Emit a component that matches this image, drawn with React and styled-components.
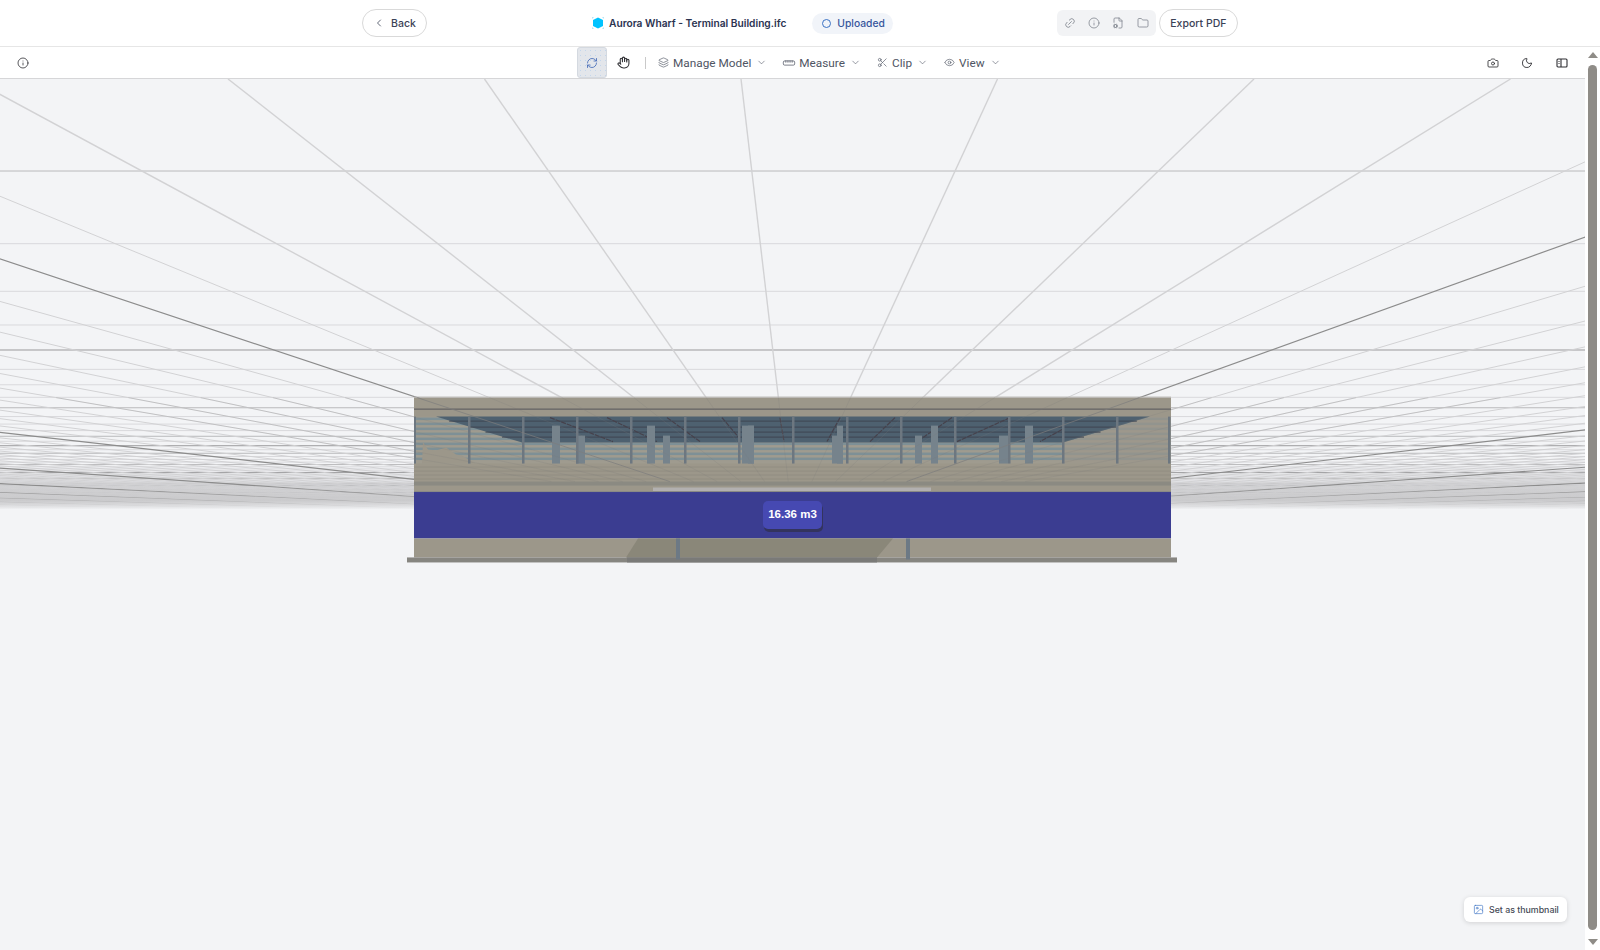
import React from 'react'
import styled, { createGlobalStyle } from 'styled-components'
import {
  Camera, ChevronDown, ChevronLeft, Eye, FileCog, Folder, Hand, Image, Info, Layers, Link2, Moon,
  RefreshCw, Ruler, Scissors,
} from 'lucide-react'

const GlobalStyle = createGlobalStyle`
  html, body { margin: 0; height: 100%; overflow: hidden; background: #fff; }
  #root { height: 100%; }
`

const Page = styled.div`
  display: flex;
  flex-direction: column;
  height: 950px;
  font-family: Inter, "Liberation Sans", sans-serif;
`
const Header = styled.header`
  display: flex;
  align-items: center;
  height: 46px;
  padding-left: 362px;
  border-bottom: 1px solid #e6e6e6;
  flex: none;
`
const PillButton = styled.button`
  display: flex;
  align-items: center;
  justify-content: center;
  gap: 6px;
  flex: none;
  height: 28px;
  width: ${(p) => p.$width}px;
  margin-left: ${(p) => p.$left || 0}px;
  padding: 0;
  background: #fff;
  border: 1px solid #d9d9d9;
  border-radius: 14px;
  color: #3b4256;
  font: 500 10.5px Inter, sans-serif;
`
const ModelIcon = styled.svg`
  flex: none;
  width: 12px;
  height: 12px;
  margin-left: 165px;
`
const Title = styled.span`
  margin-left: 5px;
  font-size: 10.2px;
  font-weight: 600;
  color: #2b3350;
  white-space: nowrap;
`
const Status = styled.span`
  display: flex;
  align-items: center;
  gap: 6px;
  flex: none;
  height: 21px;
  margin-left: 26px;
  padding: 0 8px 0 10px;
  background: #f1f4f9;
  border-radius: 11px;
  color: #37569c;
  font-size: 10.3px;
  font-weight: 500;
`
const StatusRing = styled.i`
  width: 7px;
  height: 7px;
  border: 1.3px solid #3b72c4;
  border-radius: 50%;
`
const IconGroup = styled.div`
  display: flex;
  align-items: center;
  justify-content: space-around;
  flex: none;
  width: 99px;
  height: 26px;
  margin-left: 164px;
  padding: 0 1px;
  box-sizing: border-box;
  background: #f2f3f5;
  border-radius: 6px;
  color: #7a7f88;
`
const LinkGlyph = styled(Link2)`
  transform: rotate(-45deg);
`
const Body = styled.div`
  flex: 1;
  display: flex;
  min-height: 0;
`
const Main = styled.main`
  flex: 1;
  display: flex;
  flex-direction: column;
  min-width: 0;
`
const Toolbar = styled.div`
  display: flex;
  align-items: center;
  flex: none;
  height: 31px;
  padding-right: 17px;
  border-bottom: 1px solid #d6d6d8;
  color: #4a4f5a;
`
const PlainIcon = styled.span`
  display: flex;
  align-items: center;
  flex: none;
  margin-left: ${(p) => (p.$push ? 'auto' : `${p.$left || 0}px`)};
  color: #2f2f33;
`
const ActiveTool = styled.span`
  display: flex;
  align-items: center;
  justify-content: center;
  align-self: stretch;
  flex: none;
  width: 30px;
  margin-left: 548px;
  background-color: #e3e6eb;
  background-image: radial-gradient(#c3d6ec 0.7px, transparent 0.8px);
  background-size: 5px 5px;
  border: 1px solid #d4d9e0;
  border-radius: 3px;
  box-sizing: border-box;
  color: #3f66b5;
`
const Separator = styled.i`
  flex: none;
  width: 1px;
  height: 12px;
  margin-left: 15px;
  background: #c9c9c9;
`
const Menu = styled.span`
  display: flex;
  align-items: center;
  flex: none;
  margin-left: ${(p) => p.$left}px;
  color: #4f5563;
  font: 400 11.8px Roboto, sans-serif;
  white-space: nowrap;
`
const MenuLabel = styled.span`
  margin: 0 5px 0 4px;
`
const RulerGlyph = styled(Ruler)`
  transform: rotate(-45deg);
`
const Viewport = styled.div`
  position: relative;
  flex: 1;
  min-height: 0;
  background: #f3f4f6;
`
const Scene = styled.svg`
  display: block;
  width: 100%;
  height: 100%;
`
const VolumeTag = styled.div`
  position: absolute;
  left: 763px;
  top: 422px;
  width: 59px;
  height: 28px;
  padding-bottom: 2px;
  box-sizing: border-box;
  display: flex;
  align-items: center;
  justify-content: center;
  background: #4649b2;
  border-radius: 5px;
  box-shadow: 1px 3px 0 #33345e;
  color: #fff;
  font: 700 11.5px "Liberation Sans", sans-serif;
`
const ThumbnailButton = styled.div`
  position: absolute;
  right: 18px;
  bottom: 28px;
  display: flex;
  align-items: center;
  gap: 5px;
  width: 103px;
  height: 25px;
  padding-left: 9px;
  box-sizing: border-box;
  background: #fff;
  border-radius: 6px;
  box-shadow: 0 1px 5px rgba(0, 0, 0, 0.14);
  color: #454a55;
  font-size: 8.8px;
  font-weight: 500;
  white-space: nowrap;
`
const ScrollRail = styled.div`
  display: flex;
  flex-direction: column;
  align-items: center;
  flex: none;
  width: 15px;
  padding: 5px 0;
  box-sizing: border-box;
  background: #fff;
`
const Arrow = styled.i`
  width: 0;
  height: 0;
  border-left: 5px solid transparent;
  border-right: 5px solid transparent;
  ${(p) => (p.$down ? 'border-top' : 'border-bottom')}: 6px solid #8f8c87;
`
const Thumb = styled.div`
  flex: 1;
  width: 9px;
  margin: 7px 0 9px;
  background: #8f8c87;
  border-radius: 5px;
`

const VP_X = 793
const VP_Y = 522
const FOG_Y = 508

const radialX = (top, y) => VP_X + ((top - VP_X) * (VP_Y - y)) / (VP_Y - 78)

// ground grid, same perspective on both axes
const radial = []
for (let n = -240; n <= 240; n++) {
  radial.push({ n, top: VP_X - 52 + 256.5 * n })
}
const depth = []
for (let m = 4; m < 110; m++) {
  depth.push({ m, y: 520 - 1333 / (m - 0.19) })
}
const isMajorRadial = (n) => n !== 0 && Math.abs(n) % 10 === 5

function Ground() {
  return (
    <g fill="none">
      {depth.filter((d) => d.y < FOG_Y).map((d) => (
        <line key={d.m} x1="0" x2="1585" y1={d.y} y2={d.y}
          stroke={d.m % 10 === 8 ? '#9a9a9c' : d.m % 4 === 0 ? '#b9b9bb' : '#d9d9dc'} strokeWidth="1" />
      ))}
      {radial.map((r) => (
        <line key={r.n} x1={r.top} y1="78" x2={radialX(r.top, FOG_Y)} y2={FOG_Y}
          stroke={isMajorRadial(r.n) ? '#8c8c8c' : '#d2d2d4'} strokeWidth={isMajorRadial(r.n) ? 1.2 : Math.abs(r.n) < 4 ? 1.4 : 1} />
      ))}
      <rect x="0" y="486" width="1585" height="23" fill="url(#fog)" />
    </g>
  )
}

const BAY_XS = [468, 522, 576, 630, 684, 738, 792, 846, 900, 954, 1008, 1062, 1116, 1168]
const PILLARS = [
  [552, 8, 425], [576, 9, 435], [647, 8, 425], [663, 7, 435], [742, 12, 425], [748, 6, 425],
  [832, 11, 435], [837, 6, 425], [915, 7, 435], [931, 7, 425], [999, 9, 435], [1025, 8, 425],
]
const GLASS_BANDS = [417, 422, 427, 432, 437, 442, 447, 452, 457]
const RAKES = [
  [550, 417, 613, 441], [607, 417, 657, 441], [667, 417, 700, 441], [722, 417, 738, 436],
  [780, 417, 784, 441], [840, 417, 827, 441], [895, 417, 870, 441], [952, 417, 917, 441],
  [1010, 417, 957, 441], [1062, 429, 1040, 441],
]

function Terminal() {
  return (
    <g>
      <rect x="414" y="397" width="757" height="94" fill="#9c978a" />
      <rect x="414" y="396" width="757" height="1" fill="#b5b3ad" />
      <rect x="414" y="408" width="757" height="1" fill="#55555a" />
      <rect x="414" y="416" width="757" height="47" fill="#9f9b8f" />
      {GLASS_BANDS.map((y) => (
        <rect key={y} x="414" y={y} width="757" height="2.5" fill="#7e9096" />
      ))}
      {/* sun patch washes out the right end of the glazing */}
      <polygon points="1171,416 1150,416 1063,442 1063,463 1171,463" fill="#9c978a" fillOpacity="0.68" />
      <polygon points="422,463 423,442 428,449 436,450 446,447 456,454 462,455 475,463" fill="#9c978a" />
      <polygon points="436,416 1150,416 1063,442 522,442" fill="#4e6170" />
      {[420, 426, 431, 436].map((y) => (
        <rect key={y} x={436 + (y - 416) * 3.3} y={y} width={714 - (y - 416) * 6.6} height="1" fill="#3f4552" />
      ))}
      {RAKES.map(([x1, y1, x2, y2]) => (
        <line key={x1} x1={x1} y1={y1} x2={x2} y2={y2} stroke="#46424c" strokeWidth="1.2" strokeDasharray="5 1" />
      ))}
      {PILLARS.map(([x, w, y]) => (
        <rect key={x} x={x} y={y} width={w} height={463 - y} fill="#76838c" />
      ))}
      {BAY_XS.map((x) => (
        <rect key={x} x={x} y="416" width="2.5" height="47" fill="#6d7780" />
      ))}
      <rect x="414" y="416" width="2" height="47" fill="#6d7780" />
      {[466, 470, 474, 478].map((y) => (
        <rect key={y} x="414" y={y} width="757" height="1" fill="#928e82" />
      ))}
      <rect x="414" y="481" width="757" height="4" fill="#8b8a82" />
      <rect x="653" y="487" width="278" height="4" fill="#b2b0b0" />
      <rect x="414" y="490.5" width="757" height="1" fill="#8a8a86" />
      <rect x="414" y="491.5" width="757" height="46.5" fill="#3b3d91" />
      <rect x="414" y="538" width="757" height="19" fill="#9c978a" />
      <polygon points="638,538 893,538 877,557 626,557" fill="#8a8779" />
      <rect x="407" y="557" width="770" height="5" fill="#868580" />
      <rect x="627" y="557" width="250" height="5" fill="#7a7a78" />
      <rect x="676" y="538" width="4" height="21" fill="#6c7985" />
      <rect x="906" y="538" width="4" height="21" fill="#6c7985" />
      {/* grid shows faintly through the shell */}
      {radial.filter((r) => Math.abs(r.n) <= 10).map((r) => (
        <line key={r.n} x1={radialX(r.top, 397)} y1="397" x2={radialX(r.top, 481)} y2="481"
          stroke="#7c7c7c" strokeOpacity={isMajorRadial(r.n) ? 0.7 : 0.2} strokeWidth="1" />
      ))}
    </g>
  )
}

export default function App() {
  return (
    <>
      <GlobalStyle />
      <Page>
        <Header>
          <PillButton $width={65}>
            <ChevronLeft size={12} strokeWidth={1.6} />
            Back
          </PillButton>
          <ModelIcon viewBox="0 0 12 12">
            <polygon points="6,0.5 11,3 11,9 6,11.5 1,9 1,3" fill="#00c3ff" />
            <path d="M0 2V0h2M10 0h2v2M12 10v2h-2M2 12H0v-2" fill="none" stroke="#6fcdf0" strokeWidth="0.6" />
          </ModelIcon>
          <Title>Aurora Wharf - Terminal Building.ifc</Title>
          <Status>
            <StatusRing />
            Uploaded
          </Status>
          <IconGroup>
            <LinkGlyph size={12} strokeWidth={1.5} />
            <Info size={12} strokeWidth={1.5} />
            <FileCog size={12} strokeWidth={1.5} />
            <Folder size={12} strokeWidth={1.5} />
          </IconGroup>
          <PillButton $width={79} $left={3}>Export PDF</PillButton>
        </Header>
        <Body>
          <Main>
            <Toolbar>
              <PlainIcon $left={17}><Info size={12} strokeWidth={1.6} /></PlainIcon>
              <ActiveTool><RefreshCw size={12} strokeWidth={1.6} /></ActiveTool>
              <PlainIcon $left={10}><Hand size={13} strokeWidth={2} /></PlainIcon>
              <Separator />
              <Menu $left={12}>
                <Layers size={11} strokeWidth={1.4} />
                <MenuLabel>Manage Model</MenuLabel>
                <ChevronDown size={11} strokeWidth={1.3} />
              </Menu>
              <Menu $left={16}>
                <RulerGlyph size={12} strokeWidth={1.4} />
                <MenuLabel>Measure</MenuLabel>
                <ChevronDown size={11} strokeWidth={1.3} />
              </Menu>
              <Menu $left={16}>
                <Scissors size={11} strokeWidth={1.4} />
                <MenuLabel>Clip</MenuLabel>
                <ChevronDown size={11} strokeWidth={1.3} />
              </Menu>
              <Menu $left={16}>
                <Eye size={11} strokeWidth={1.4} />
                <MenuLabel>View</MenuLabel>
                <ChevronDown size={11} strokeWidth={1.3} />
              </Menu>
              <PlainIcon $push><Camera size={12} strokeWidth={1.7} /></PlainIcon>
              <PlainIcon $left={22}><Moon size={12} strokeWidth={1.8} /></PlainIcon>
              <PlainIcon $left={23}>
                <svg width="12" height="12" viewBox="0 0 24 24" fill="none" stroke="currentColor" strokeWidth="2.2">
                  <rect x="2" y="4" width="20" height="16" rx="2" />
                  <path d="M10 4v16M5 9h2M5 13h2" />
                </svg>
              </PlainIcon>
            </Toolbar>
            <Viewport>
              <Scene viewBox="0 78 1585 872" preserveAspectRatio="none">
                <defs>
                  <linearGradient id="fog" x1="0" y1="0" x2="0" y2="1">
                    <stop offset="0" stopColor="#c4c4c6" stopOpacity="0.1" />
                    <stop offset="0.6" stopColor="#c6c6c8" stopOpacity="0.6" />
                    <stop offset="1" stopColor="#f3f4f6" stopOpacity="1" />
                  </linearGradient>
                </defs>
                <Ground />
                <Terminal />
              </Scene>
              <VolumeTag>16.36 m3</VolumeTag>
              <ThumbnailButton>
                <Image size={11} strokeWidth={1.4} color="#3b72c4" />
                Set as thumbnail
              </ThumbnailButton>
            </Viewport>
          </Main>
          <ScrollRail>
            <Arrow />
            <Thumb />
            <Arrow $down />
          </ScrollRail>
        </Body>
      </Page>
    </>
  )
}
